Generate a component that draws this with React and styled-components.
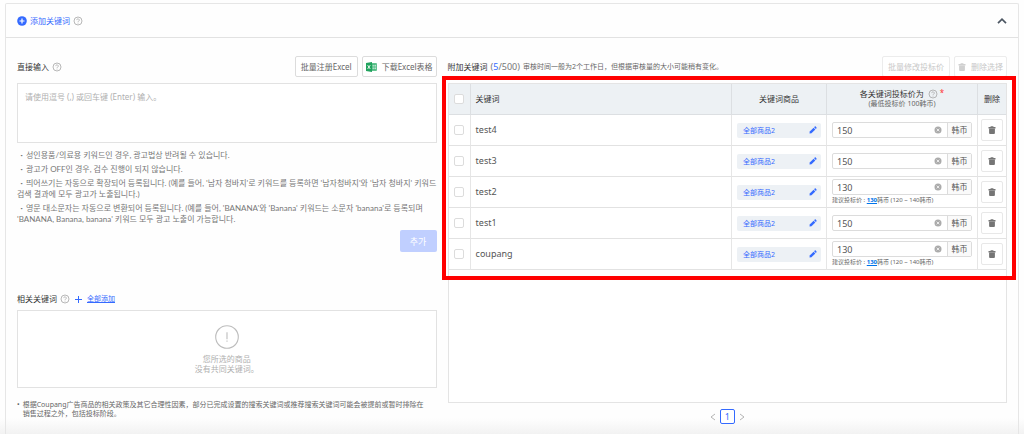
import React, { useState } from "react";
import styled, { createGlobalStyle } from "styled-components";

const initialRows = [
  { id: 1, name: "test4", price: "150" },
  { id: 2, name: "test3", price: "150" },
  { id: 3, name: "test2", price: "130", suggested: "130" },
  { id: 4, name: "test1", price: "150" },
  { id: 5, name: "coupang", price: "130", suggested: "130" },
];

const HelpIcon = () => (
  <Icon width="10" height="10" viewBox="0 0 20 20" fill="none" stroke="#a6a6a6">
    <circle cx="10" cy="10" r="8" strokeWidth="1.6" />
    <path d="M7.4 8.2a2.6 2.4 0 1 1 3.9 2c-.9.5-1.3.9-1.3 1.8" strokeWidth="1.5" />
    <path d="M10 13.4v1.6" strokeWidth="1.6" />
  </Icon>
);

const PlusCircle = () => (
  <Icon width="10" height="10" viewBox="0 0 20 20">
    <circle cx="10" cy="10" r="9.6" fill="#346aff" />
    <path d="M10 5v10M5 10h10" stroke="#fff" strokeWidth="2.4" />
  </Icon>
);

const TrashIcon = ({ color = "#757575" }) => (
  <Icon width="8" height="8" viewBox="0 0 16 16" fill={color}>
    <path d="M5.5 0.5h5l.7 1.5H15v3H1V2h3.8z" />
    <path d="M2.2 5h11.6v9a1.8 1.8 0 0 1-1.8 1.8H4A1.8 1.8 0 0 1 2.2 14z" />
  </Icon>
);

const PencilIcon = () => (
  <Icon width="8" height="8" viewBox="0 0 16 16" fill="#346aff">
    <path d="M1.5 11.2 9.2 3.5l3.4 3.4-7.7 7.7-3.9.6z" />
    <path d="m10.2 2.5 1.4-1.4c.5-.5 1.2-.5 1.7 0l1.7 1.7c.5.5.5 1.2 0 1.7l-1.4 1.4z" />
  </Icon>
);

const ClearIcon = () => (
  <Icon width="8" height="8" viewBox="0 0 16 16">
    <circle cx="8" cy="8" r="7" fill="#ababab" />
    <path d="m5.3 5.3 5.4 5.4M10.7 5.3l-5.4 5.4" stroke="#fff" strokeWidth="1.5" />
  </Icon>
);

const ExcelIcon = () => (
  <Icon width="11" height="10" viewBox="0 0 22 20">
    <path d="M11 2.5h10.5v15H11z" fill="#2fae6b" />
    <path d="M13 5.5h2.6v2H13zM16.8 5.5h3v2h-3zM13 9h2.6v2H13zM16.8 9h3v2h-3zM13 12.5h2.6v2H13zM16.8 12.5h3v2h-3z" fill="#fff" />
    <path d="M0 2 12 0v20L0 18z" fill="#21a35e" />
    <path d="m3.4 6.4 5 7.4M8.4 6.4l-5 7.4" stroke="#fff" strokeWidth="1.8" />
  </Icon>
);

const AlertIcon = () => (
  <Icon width="24" height="24" viewBox="0 0 24 24" fill="none" stroke="#bdbdbd">
    <circle cx="12" cy="12" r="11.3" strokeWidth="1.1" />
    <path d="M12 7.2v7M12 15.4v1.4" strokeWidth="1.1" />
  </Icon>
);

const Arrow = ({ d }) => (
  <Icon width="6" height="8" viewBox="0 0 6 8" fill="none" stroke="#b5b5b5">
    <path d={d} />
  </Icon>
);

const App = () => {
  const [rows, setRows] = useState(initialRows);
  const [checked, setChecked] = useState([]);

  const setPrice = (id, price) =>
    setRows(rows.map((row) => (row.id === id ? { ...row, price } : row)));
  const removeRow = (id) => setRows(rows.filter((row) => row.id !== id));
  const toggle = (id) =>
    setChecked(
      checked.includes(id) ? checked.filter((c) => c !== id) : [...checked, id]
    );
  const toggleAll = () =>
    setChecked(checked.length === rows.length ? [] : rows.map((r) => r.id));

  return (
    <>
      <GlobalStyle />
      <Page>
        <Panel>
          <PanelHeader>
            <PanelTitle>
              <PlusCircle />
              添加关键词
              <HelpIcon />
            </PanelTitle>
            <PlainButton aria-label="收起">
              <Icon width="10" height="6" viewBox="0 0 10 6" fill="none" stroke="#4d5763">
                <path d="M1 5.2 5 1.2l4 4" strokeWidth="1.7" />
              </Icon>
            </PlainButton>
          </PanelHeader>
          <Columns>
            <Column>
              <TitleBar>
                <Label htmlFor="direct">
                  直接输入
                  <HelpIcon />
                </Label>
                <Buttons>
                  <Button>批量注册Excel</Button>
                  <Button $icon>
                    <ExcelIcon />
                    下载Excel表格
                  </Button>
                </Buttons>
              </TitleBar>
              <TextArea
                id="direct"
                placeholder="请使用逗号 (,) 或回车键 (Enter) 输入。"
              />
              <Notes lang="ko">
                <li>성인용품/의료용 키워드인 경우, 광고법상 반려될 수 있습니다.</li>
                <li>광고가 OFF인 경우, 검수 진행이 되지 않습니다.</li>
                <li>
                  띄어쓰기는 자동으로 확장되어 등록됩니다. (예를 들어, '남자
                  청바지'로 키워드를 등록하면 '남자청바지'와 '남자 청바지' 키워드
                  검색 결과에 모두 광고가 노출됩니다.)
                </li>
                <li>
                  영문 대소문자는 자동으로 변환되어 등록됩니다. (예를 들어,
                  'BANANA'와 'Banana' 키워드는 소문자 'banana'로 등록되며
                  'BANANA, Banana, banana' 키워드 모두 광고 노출이 가능합니다.
                </li>
              </Notes>
              <AddButton lang="ko">추가</AddButton>
              <RelatedBar>
                <Title>
                  相关关键词
                  <HelpIcon />
                </Title>
                <Icon width="7" height="7" viewBox="0 0 7 7" stroke="#346aff">
                  <path d="M3.5 0v7M0 3.5h7" />
                </Icon>
                <Link href="#all">全部添加</Link>
              </RelatedBar>
              <EmptyBox>
                <AlertIcon />
                <p>
                  您所选的商品
                  <br />
                  没有共同关键词。
                </p>
              </EmptyBox>
              <Footnote>
                <span>•</span>
                <p>
                  根据Coupang广告商品的相关政策及其它合理性因素，部分已完成设置的搜索关键词或推荐搜索关键词可能会被提前或暂时排除在
                  <br />
                  销售过程之外，包括投标阶段。
                </p>
              </Footnote>
            </Column>
            <Column $main>
              <TitleBar>
                <Title>
                  附加关键词
                  <Count>
                    (<b>{rows.length}</b>/500)
                  </Count>
                  <Hint>审核时间一般为2个工作日，但根据审核量的大小可能稍有变化。</Hint>
                </Title>
                <Buttons>
                  <Button disabled>批量修改投标价</Button>
                  <Button disabled $icon>
                    <TrashIcon color="#d0d0d0" />
                    删除选择
                  </Button>
                </Buttons>
              </TitleBar>
              <TableBox>
                <TableWrap>
                  <Table>
                    <thead>
                      <tr>
                        <Th $width={22} $center>
                          <Checkbox
                            type="checkbox"
                            aria-label="全选"
                            checked={checked.length > 0 && checked.length === rows.length}
                            onChange={toggleAll}
                          />
                        </Th>
                        <Th>关键词</Th>
                        <Th $width={95} $center>关键词商品</Th>
                        <Th $width={151} $center>
                          <BidTitle>
                            各关键词投标价为
                            <HelpIcon />
                            <Star>*</Star>
                          </BidTitle>
                          <SubTitle>(最低投标价 100韩币)</SubTitle>
                        </Th>
                        <Th $width={28} $center>删除</Th>
                      </tr>
                    </thead>
                    <tbody>
                      {rows.map((row) => (
                        <tr key={row.id}>
                          <Td $center>
                            <Checkbox
                              type="checkbox"
                              aria-label={row.name}
                              checked={checked.includes(row.id)}
                              onChange={() => toggle(row.id)}
                            />
                          </Td>
                          <Td $name>{row.name}</Td>
                          <Td>
                            <Product>
                              全部商品2
                              <PencilIcon />
                            </Product>
                          </Td>
                          <Td>
                            <PriceField>
                              <PriceInput
                                aria-label={`${row.name} 投标价`}
                                value={row.price}
                                onChange={(e) => setPrice(row.id, e.target.value)}
                              />
                              <ClearButton
                                aria-label="清除"
                                onClick={() => setPrice(row.id, "")}
                              >
                                <ClearIcon />
                              </ClearButton>
                              <Unit>韩币</Unit>
                            </PriceField>
                            {row.suggested && (
                              <Suggest>
                                建议投标价 : <SuggestLink href="#bid">{row.suggested}</SuggestLink>
                                韩币 (120 ~ 140韩币)
                              </Suggest>
                            )}
                          </Td>
                          <Td $center>
                            <DeleteButton
                              aria-label={`删除 ${row.name}`}
                              onClick={() => removeRow(row.id)}
                            >
                              <TrashIcon />
                            </DeleteButton>
                          </Td>
                        </tr>
                      ))}
                    </tbody>
                  </Table>
                  <Highlight />
                </TableWrap>
              </TableBox>
              <Pagination>
                <PlainButton aria-label="上一页">
                  <Arrow d="M5 1 1 4l4 3" />
                </PlainButton>
                <PageButton>1</PageButton>
                <PlainButton aria-label="下一页">
                  <Arrow d="m1 1 4 3-4 3" />
                </PlainButton>
              </Pagination>
            </Column>
          </Columns>
        </Panel>
      </Page>
    </>
  );
};
export default App;

const GlobalStyle = createGlobalStyle`
  * {
    box-sizing: border-box;
  }
  body {
    margin: 0;
    background-color: #fefefe;
    color: #555;
    font-family: "Noto Sans", "Noto Sans CJK SC", sans-serif;
    font-size: 8px;
    line-height: 10px;
  }
  p, ul {
    margin: 0;
    padding: 0;
  }
  button, input, textarea {
    font-family: inherit;
    color: inherit;
    padding: 0;
  }
`;
const Icon = styled.svg`
  display: block;
  flex: none;
`;
const Page = styled.div`
  min-height: 100vh;
  display: flex;
  padding: 3px 5px 0;
  background: linear-gradient(to top, #f2f2f2, #fefefe 16px);
`;
const Panel = styled.section`
  flex: 1;
  min-width: 0;
  border: 1px solid #e6e6e6;
  border-bottom: none;
  border-radius: 2px 2px 0 0;
`;
const PanelHeader = styled.header`
  height: 34px;
  padding: 0 11px;
  display: flex;
  justify-content: space-between;
  align-items: center;
  border-bottom: 1px solid #e2e2e2;
`;
const PanelTitle = styled.div`
  display: flex;
  align-items: center;
  gap: 3px;
  color: #346aff;
`;
const PlainButton = styled.button`
  border: none;
  background: none;
`;
const Columns = styled.div`
  display: flex;
  gap: 11px;
  padding: 18px 11px 8px;
`;
const Column = styled.div`
  flex: ${(props) => (props.$main ? 4 : 3)} 1 0;
  min-width: 0;
`;
const TitleBar = styled.div`
  height: 21px;
  margin-bottom: 6px;
  display: flex;
  justify-content: space-between;
  align-items: center;
`;
const Title = styled.div`
  display: flex;
  align-items: center;
  gap: 3px;
  color: #333;
  white-space: nowrap;
`;
const Label = styled.label`
  display: flex;
  align-items: center;
  gap: 3px;
  color: #333;
`;
const Count = styled.span`
  font-size: 9px;
  color: #777;
  b {
    font-weight: normal;
    color: #346aff;
  }
`;
const Hint = styled.span`
  font-size: 7px;
  color: #666;
`;
const Buttons = styled.div`
  display: flex;
  gap: 4px;
`;
const Button = styled.button`
  height: 21px;
  padding: 0 ${(props) => (props.$icon ? 3 : 5)}px;
  display: flex;
  align-items: center;
  gap: 5px;
  border: 1px solid #dcdcdc;
  border-radius: 2px;
  background-color: #fff;
  font-size: 8px;
  white-space: nowrap;
  color: #666;
  &:disabled {
    border-color: #ececec;
    color: #c8c8c8;
  }
`;
const TextArea = styled.textarea`
  display: block;
  width: 100%;
  height: 60px;
  padding: 8px 7px;
  border: 1px solid #e2e2e2;
  background-color: #fff;
  font-size: 8px;
  line-height: 10px;
  resize: none;
  &::placeholder {
    color: #b0b0b0;
  }
`;
const Notes = styled.ul`
  margin-top: 7px;
  list-style: none;
  font-family: Lato, "Noto Sans CJK KR", sans-serif;
  font-size: 8px;
  line-height: 11px;
  color: #777;
  word-break: keep-all;
  li + li {
    margin-top: 3px;
  }
  li::before {
    content: "·";
    display: inline-block;
    width: 9px;
    text-align: center;
    font-weight: bold;
  }
`;
const AddButton = styled.button`
  display: block;
  width: 37px;
  height: 22px;
  margin: 5px 0 0 auto;
  border: none;
  border-radius: 2px;
  background-color: #c0cfff;
  color: #fff;
  font-family: "Noto Sans CJK KR", sans-serif;
  font-size: 9px;
`;
const RelatedBar = styled.div`
  display: flex;
  align-items: center;
  gap: 5px;
  margin: 42px 0 6px;
`;
const Link = styled.a`
  font-size: 7px;
  color: #346aff;
`;
const EmptyBox = styled.div`
  height: 78px;
  display: flex;
  flex-direction: column;
  align-items: center;
  justify-content: center;
  gap: 5px;
  border: 1px solid #e2e2e2;
  background-color: #fff;
  text-align: center;
  color: #b0b0b0;
`;
const Footnote = styled.div`
  display: flex;
  gap: 3px;
  margin-top: 12px;
  font-size: 7px;
  line-height: 9px;
  color: #666;
`;
const TableBox = styled.div`
  min-height: 320px;
  border: 1px solid #e4e4e4;
  background-color: #fff;
`;
const TableWrap = styled.div`
  position: relative;
`;
const Table = styled.table`
  width: 100%;
  table-layout: fixed;
  border-collapse: separate;
  border-spacing: 0;
`;
const Th = styled.th`
  width: ${(props) => (props.$width ? `${props.$width}px` : "auto")};
  height: 31px;
  padding: ${(props) => (props.$center ? 0 : "0 5px")};
  border-bottom: 1px solid #dcdfe2;
  border-right: 1px solid #dcdfe2;
  background-color: #edf1f4;
  font-weight: normal;
  text-align: ${(props) => (props.$center ? "center" : "left")};
  color: #333;
  &:last-child {
    border-right: none;
  }
`;
const Td = styled.td`
  height: 31px;
  padding: ${(props) => (props.$center ? 0 : "0 5px")};
  border-bottom: 1px solid #e2e2e2;
  border-right: 1px solid #e6e6e6;
  font-size: ${(props) => (props.$name ? 9 : 8)}px;
  text-align: ${(props) => (props.$center ? "center" : "left")};
  &:last-child {
    border-right: none;
  }
`;
const Checkbox = styled.input`
  appearance: none;
  display: block;
  width: 10px;
  height: 10px;
  margin: 0 auto;
  border: 1px solid #dcdcdc;
  border-radius: 2px;
  background-color: #fff;
  &:checked {
    background-color: #346aff;
  }
`;
const BidTitle = styled.div`
  display: flex;
  justify-content: center;
  align-items: center;
  gap: 4px;
`;
const Star = styled.span`
  align-self: flex-start;
  line-height: 8px;
  margin-left: -2px;
  color: #f33;
`;
const SubTitle = styled.div`
  font-size: 7px;
  color: #666;
`;
const Product = styled.button`
  width: 100%;
  height: 15px;
  padding: 0 4px 0 6px;
  display: flex;
  justify-content: space-between;
  align-items: center;
  border: none;
  border-radius: 2px;
  background-color: #edf1f5;
  color: #346aff;
  font-size: 7px;
`;
const PriceField = styled.div`
  height: 16px;
  display: flex;
  align-items: stretch;
  border: 1px solid #dcdcdc;
  border-radius: 2px;
  background-color: #fff;
`;
const PriceInput = styled.input`
  flex: 1;
  min-width: 0;
  padding-left: 4px;
  border: none;
  background: none;
  font-size: 9px;
`;
const ClearButton = styled.button`
  width: 18px;
  display: flex;
  justify-content: center;
  align-items: center;
  border: none;
  background: none;
`;
const Unit = styled.span`
  width: 24px;
  display: flex;
  justify-content: center;
  align-items: center;
  border-left: 1px solid #dcdcdc;
  background-color: #fafafa;
`;
const Suggest = styled.div`
  font-size: 6px;
  white-space: nowrap;
  color: #666;
`;
const SuggestLink = styled.a`
  font-weight: bold;
  color: #0073e9;
`;
const DeleteButton = styled.button`
  width: 22px;
  height: 22px;
  margin: 0 auto;
  display: flex;
  justify-content: center;
  align-items: center;
  border: 1px solid #e8e8e8;
  border-radius: 2px;
  background-color: #fff;
`;
/* red frame drawn over the table */
const Highlight = styled.div`
  position: absolute;
  inset: -8px -10px -10px -7px;
  border: 4px solid #f00;
  pointer-events: none;
`;
const Pagination = styled.nav`
  display: flex;
  justify-content: center;
  align-items: center;
  gap: 4px;
  margin-top: 6px;
`;
const PageButton = styled.button`
  width: 15px;
  height: 15px;
  border: 1px solid #346aff;
  border-radius: 2px;
  background-color: #fff;
  color: #346aff;
  font-size: 9px;
  line-height: 12px;
`;
